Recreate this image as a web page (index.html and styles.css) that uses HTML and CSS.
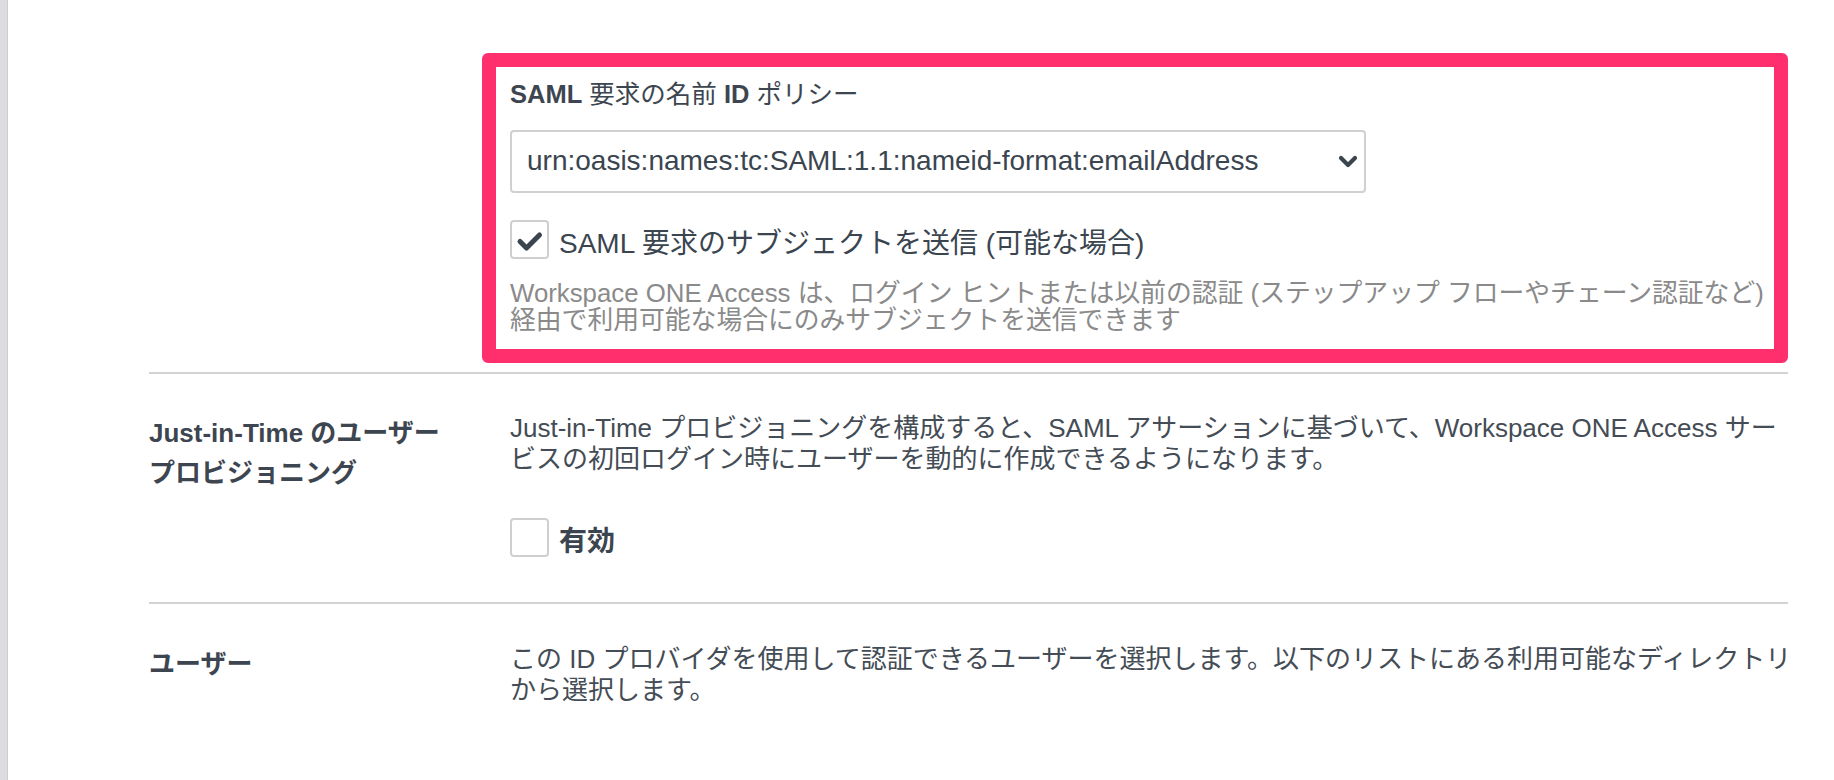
FILE: index.html
```html
<!DOCTYPE html>
<html lang="ja">
<head>
<meta charset="utf-8">
<title>SAML 設定</title>
<link rel="stylesheet" href="styles.css">
</head>
<body>
<div class="app">
  <div class="edge"></div>
  <main class="form">
    <section class="row row-first">
      <div class="row-label"></div>
      <div class="row-body">
        <div class="highlight">
          <div class="field-label"><b>SAML</b> 要求の名前 <b>ID</b> ポリシー</div>
          <div class="select">
            <span class="select-value">urn:oasis:names:tc:SAML:1.1:nameid-format:emailAddress</span>
            <svg class="chev" width="20" height="13" viewBox="0 0 20 13"><polyline points="3,3 10,10 17,3" fill="none" stroke="#3b4550" stroke-width="4.2" stroke-linecap="round" stroke-linejoin="round"/></svg>
          </div>
          <div class="check-row">
            <span class="checkbox"><svg width="35" height="35" viewBox="2 2 35 35"><polyline points="10,21.5 16.5,28 29.5,15" fill="none" stroke="#3b4550" stroke-width="5" stroke-linecap="round" stroke-linejoin="round"/></svg></span>
            <span class="check-text">SAML 要求のサブジェクトを送信 (可能な場合)</span>
          </div>
          <p class="help">Workspace ONE Access は、ログイン ヒントまたは以前の認証 (ステップアップ フローやチェーン認証など)<br>経由で利用可能な場合にのみサブジェクトを送信できます</p>
        </div>
      </div>
    </section>

    <section class="row row-jit">
      <div class="row-label">Just-in-Time のユーザー<br>プロビジョニング</div>
      <div class="row-body">
        <p class="desc">Just-in-Time プロビジョニングを構成すると、SAML アサーションに基づいて、Workspace ONE Access サー<br>ビスの初回ログイン時にユーザーを動的に作成できるようになります。</p>
        <div class="check-row check-row-spaced">
          <span class="checkbox"></span>
          <span class="check-text check-text-bold">有効</span>
        </div>
      </div>
    </section>

    <section class="row row-users">
      <div class="row-label">ユーザー</div>
      <div class="row-body">
        <p class="desc">この ID プロバイダを使用して認証できるユーザーを選択します。以下のリストにある利用可能なディレクトリ<br>から選択します。</p>
      </div>
    </section>
  </main>
</div>
</body>
</html>
```

FILE: styles.css
```css
* { box-sizing: border-box; }

html, body {
  margin: 0;
  padding: 0;
  background: #ffffff;
}

body {
  font-family: "Liberation Sans", "Noto Sans CJK JP", sans-serif;
  color: #3e4852;
}

.app {
  display: flex;
  min-height: 100vh;
}

.edge {
  flex: 0 0 8px;
  background: #dddddf;
  border-right: 1px solid #cdcdcf;
}

.form {
  flex: 1;
  padding: 0 46px 0 141px;
}

.row {
  display: grid;
  grid-template-columns: 333px 1fr;
  column-gap: 28px;
  border-bottom: 2px solid #d3d3d3;
}

.row-first { padding: 53px 0 9px; }
.row-jit { padding: 39px 0 41px; }
.row-users { padding: 40px 0 40px; border-bottom: none; }

.row-label {
  font-size: 26px;
  line-height: 40px;
  font-weight: bold;
  color: #3d4650;
  white-space: nowrap;
}

.row-body { min-width: 0; }

.highlight {
  margin-left: -28px;
  border: 14px solid #ff2e6c;
  border-radius: 6px;
  padding: 12px 10px 15px 14px;
}

.field-label {
  font-size: 25.5px;
  line-height: 30px;
  color: #3d4650;
  white-space: nowrap;
}

.field-label b { font-weight: bold; }

.select {
  margin-top: 21px;
  width: 856px;
  height: 63px;
  border: 2px solid #d0d0d0;
  border-radius: 4px;
  display: flex;
  align-items: center;
  justify-content: space-between;
  padding: 0 6px 0 15px;
}

.select-value {
  font-size: 28px;
  line-height: 30px;
  margin-bottom: 2px;
  color: #3b4550;
  white-space: nowrap;
}

.chev { display: block; }

.check-row {
  display: flex;
  align-items: flex-start;
  gap: 10px;
  margin-top: 27px;
}

.check-row-spaced { margin-top: 43px; }

.checkbox {
  flex: 0 0 39px;
  width: 39px;
  height: 39px;
  border: 2px solid #cfcfcf;
  border-radius: 4px;
  background: #fff;
  display: block;
}

.checkbox svg { display: block; }

.check-text {
  font-size: 28px;
  line-height: 39px;
  margin-top: 4px;
  color: #3b4550;
  white-space: nowrap;
}

.check-text-bold { font-weight: bold; }

.help {
  margin: 17px 0 0;
  font-size: 25.8px;
  line-height: 27px;
  color: #8a8a8a;
  white-space: nowrap;
}

.desc {
  margin: 0;
  font-size: 26px;
  line-height: 31px;
  color: #444c55;
  white-space: nowrap;
}
```
